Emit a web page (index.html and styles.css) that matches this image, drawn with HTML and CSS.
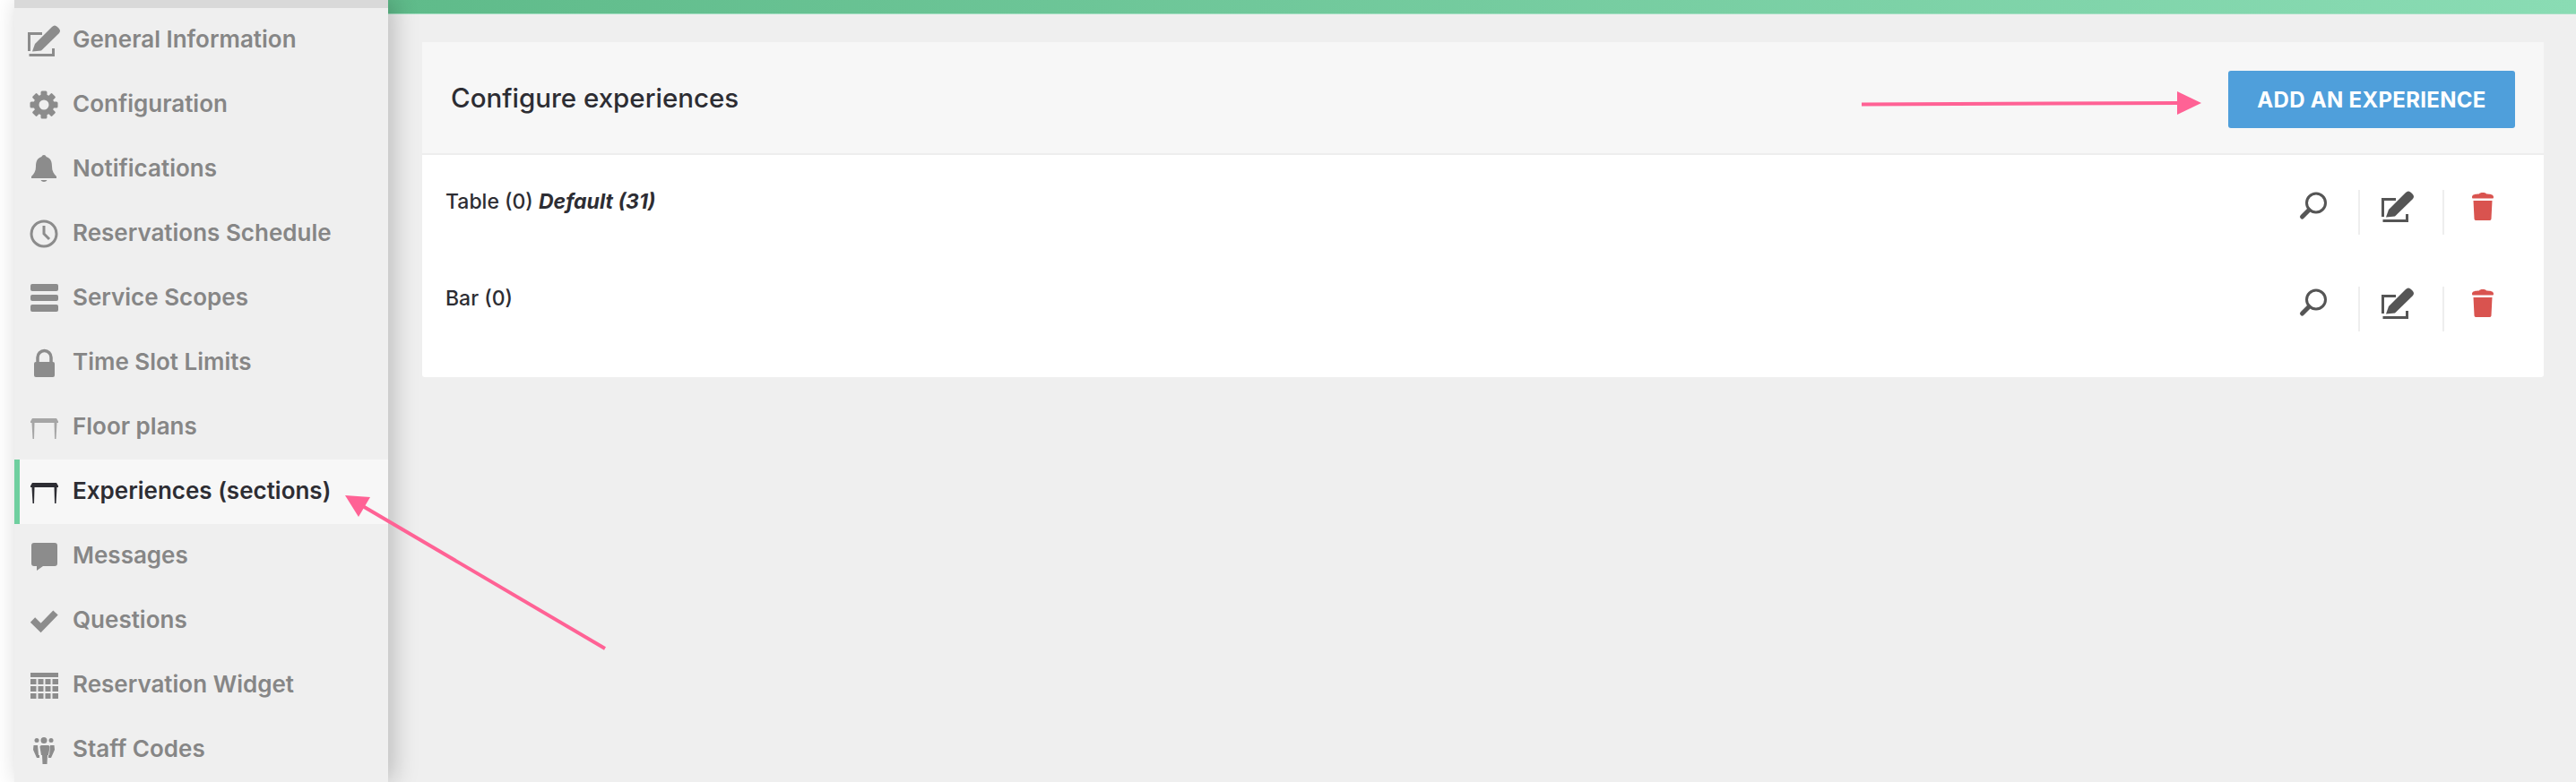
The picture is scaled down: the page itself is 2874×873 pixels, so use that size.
FILE: index.html
```html
<!DOCTYPE html>
<html>
<head>
    <title>Configure experiences</title>
    <link rel="stylesheet" href="styles.css">
</head>
<body>
    <div class="sidebar">
        <div class="sidebar-top"></div>
        <a class="nav-item">
            <svg class="nav-icon" viewBox="0 0 36 36"><path d="M1.500 30V10.500H16M1.500 34.500H28.500V27" fill="none" stroke="currentColor" stroke-width="3"/><path d="M5 30.500l3-8.500L27 3c2-2 4-2 6 0l1.500 1.500c2 2 2 4 0 6L15 29.500z" fill="currentColor"/></svg>
            <span class="nav-label">General Information</span>
        </a>
        <a class="nav-item">
            <svg class="nav-icon" viewBox="0 0 36 36"><g fill="currentColor"><rect x="14.500" y="2.500" width="7" height="31" rx="1.500"/><rect x="14.500" y="2.500" width="7" height="31" rx="1.500" transform="rotate(45 18 18)"/><rect x="14.500" y="2.500" width="7" height="31" rx="1.500" transform="rotate(90 18 18)"/><rect x="14.500" y="2.500" width="7" height="31" rx="1.500" transform="rotate(135 18 18)"/><circle cx="18" cy="18" r="11.500"/></g><circle cx="18" cy="18" r="5.500" fill="#efefef"/></svg>
            <span class="nav-label">Configuration</span>
        </a>
        <a class="nav-item">
            <svg class="nav-icon" viewBox="0 0 36 36"><path d="M18 2c1.500 0 2.500 1 2.500 2C26 5.500 27 10 27 15c0 5 2 8 5 11v2H4v-2c3-3 5-6 5-11 0-5 1-9.500 6.500-11C15.500 3 16.500 2 18 2zM14.500 30h7c-1 2.500-6 2.500-7 0z" fill="currentColor"/></svg>
            <span class="nav-label">Notifications</span>
        </a>
        <a class="nav-item">
            <svg class="nav-icon" viewBox="0 0 36 36"><circle cx="18" cy="18" r="14" fill="none" stroke="currentColor" stroke-width="3"/><path d="M18 9v9l6 6" fill="none" stroke="currentColor" stroke-width="3"/></svg>
            <span class="nav-label">Reservations Schedule</span>
        </a>
        <a class="nav-item">
            <svg class="nav-icon" viewBox="0 0 36 36"><g fill="currentColor"><rect x="3" y="2" width="31" height="8" rx="2"/><rect x="3" y="14" width="31" height="7" rx="2"/><rect x="3" y="25" width="31" height="8" rx="2"/></g></svg>
            <span class="nav-label">Service Scopes</span>
        </a>
        <a class="nav-item">
            <svg class="nav-icon" viewBox="0 0 36 36"><path d="M11 18v-6a7.500 7.500 0 0 1 15 0v6" fill="none" stroke="currentColor" stroke-width="3.500"/><rect x="7" y="17" width="23" height="17" rx="2" fill="currentColor"/></svg>
            <span class="nav-label">Time Slot Limits</span>
        </a>
        <a class="nav-item item-faded">
            <svg class="nav-icon" viewBox="0 0 36 36"><path d="M5 8h27l2 3.500v1.500h-1.500L31.500 31h-1.500l-.5-18h-22L7 31H5.500L4.500 13H3v-1.500z" fill="currentColor"/></svg>
            <span class="nav-label">Floor plans</span>
        </a>
        <a class="nav-item active">
            <svg class="nav-icon" viewBox="0 0 36 36"><path d="M5 8h27l2 3.500v1.500h-1.500L31.500 31h-1.500l-.5-18h-22L7 31H5.500L4.500 13H3v-1.500z" fill="currentColor"/></svg>
            <span class="nav-label">Experiences (sections)</span>
        </a>
        <a class="nav-item">
            <svg class="nav-icon" viewBox="0 0 36 36"><path d="M7 3h23a3 3 0 0 1 3 3v20a3 3 0 0 1-3 3H17l-7 5v-5H7a3 3 0 0 1-3-3V6a3 3 0 0 1 3-3z" fill="currentColor"/></svg>
            <span class="nav-label">Messages</span>
        </a>
        <a class="nav-item">
            <svg class="nav-icon" viewBox="0 0 36 36"><path d="M5.500 17l9 9L31 9" fill="none" stroke="currentColor" stroke-width="7.500"/></svg>
            <span class="nav-label">Questions</span>
        </a>
        <a class="nav-item">
            <svg class="nav-icon" viewBox="0 0 36 36"><path d="M3 4h31v5H3zM3 11h6.500v6H3zM11.500 11h6v6h-6zM19.500 11h6v6h-6zM27.500 11H34v6h-6.500zM3 19h6.500v6H3zM11.500 19h6v6h-6zM19.500 19h6v6h-6zM27.500 19H34v6h-6.500zM3 27h6.500v6H3zM11.500 27h6v6h-6zM19.500 27h6v6h-6zM27.500 27H34v6h-6.500z" fill="currentColor"/></svg>
            <span class="nav-label">Reservation Widget</span>
        </a>
        <a class="nav-item">
            <svg class="nav-icon" viewBox="0 0 36 36"><g fill="currentColor"><circle cx="18" cy="7.500" r="3.500"/><circle cx="10" cy="7.500" r="2.500"/><circle cx="26" cy="7.500" r="2.500"/><path d="M13.500 13h9c1.500 0 2 1 2 2l-1.500 9h-1l-.5 10h-5l-.5-10h-1l-1.500-9c0-1 .5-2 2-2z"/><path d="M6.500 13h4.500l1 11h1v3h-3L6 18z"/><path d="M29.500 13H25l-1 11h-1v3h3l4-9z"/></g></svg>
            <span class="nav-label">Staff Codes</span>
        </a>
    </div>

    <div class="main">
        <div class="top-bar"></div>
        <div class="card">
            <div class="card-header">
                <h2>Configure experiences</h2>
                <button class="btn-add">ADD AN EXPERIENCE</button>
            </div>
            <div class="row">
                <p class="row-name">Table (0) <em>Default (31)</em></p>
                <div class="row-actions">
                    <span class="action"><svg class="action-icon" viewBox="0 0 36 36"><circle cx="21" cy="14.500" r="10.500" fill="none" stroke="currentColor" stroke-width="3"/><path d="M13 22.500L5.500 30" fill="none" stroke="currentColor" stroke-width="5" stroke-linecap="round"/></svg></span>
                    <span class="action"><svg class="action-icon" viewBox="0 0 36 36"><path d="M1.500 30V10.500H16M1.500 34.500H28.500V27" fill="none" stroke="currentColor" stroke-width="3"/><path d="M5 30.500l3-8.500L27 3c2-2 4-2 6 0l1.500 1.500c2 2 2 4 0 6L15 29.500z" fill="currentColor"/></svg></span>
                    <span class="action action-delete"><svg class="action-icon" viewBox="0 0 36 36"><path d="M14 4.500c0-2 8-2 8 0 4 0 8 .5 8 3.500 0 1-.5 1.500-1 1.500H7c-.5 0-1-.5-1-1.500 0-3 4-3.500 8-3.500zM7.500 12h21l-1 20c0 1.500-1 2-2 2h-15c-1 0-2-.5-2-2z" fill="currentColor"/></svg></span>
                </div>
            </div>
            <div class="row">
                <p class="row-name">Bar (0)</p>
                <div class="row-actions">
                    <span class="action"><svg class="action-icon" viewBox="0 0 36 36"><circle cx="21" cy="14.500" r="10.500" fill="none" stroke="currentColor" stroke-width="3"/><path d="M13 22.500L5.500 30" fill="none" stroke="currentColor" stroke-width="5" stroke-linecap="round"/></svg></span>
                    <span class="action"><svg class="action-icon" viewBox="0 0 36 36"><path d="M1.500 30V10.500H16M1.500 34.500H28.500V27" fill="none" stroke="currentColor" stroke-width="3"/><path d="M5 30.500l3-8.500L27 3c2-2 4-2 6 0l1.500 1.500c2 2 2 4 0 6L15 29.500z" fill="currentColor"/></svg></span>
                    <span class="action action-delete"><svg class="action-icon" viewBox="0 0 36 36"><path d="M14 4.500c0-2 8-2 8 0 4 0 8 .5 8 3.500 0 1-.5 1.500-1 1.500H7c-.5 0-1-.5-1-1.500 0-3 4-3.500 8-3.500zM7.500 12h21l-1 20c0 1.500-1 2-2 2h-15c-1 0-2-.5-2-2z" fill="currentColor"/></svg></span>
                </div>
            </div>
        </div>
    </div>

    <!-- pink annotation arrows drawn on top of the screenshot -->
    <svg class="annotations" viewBox="0 0 2874 873">
        <path d="M2077 116.500L2432 115" stroke="#ff6295" stroke-width="4" fill="none"/>
        <path d="M2429 102L2456 115 2429 128z" fill="#ff6295"/>
        <path d="M675 724L403 564" stroke="#ff6295" stroke-width="4" fill="none"/>
        <path d="M385 553L413 555 400 577z" fill="#ff6295"/>
    </svg>
</body>
</html>
```

FILE: styles.css
```css
body {
    margin: 0;
    height: 100vh;
    overflow: hidden;
    display: flex;
    position: relative;
    background-color: #ffffff;
    padding-left: 16px;
    box-sizing: border-box;
    font-family: 'Inter', sans-serif;
}

/* Sidebar */
.sidebar {
    width: 417px;
    flex-shrink: 0;
    background-color: #efefef;
    box-shadow: 6px 0 26px rgba(0, 0, 0, 0.22);
    position: relative;
    z-index: 1;
}

.sidebar-top {
    height: 9px;
    background-color: #d9d9d9;
}

.nav-item {
    display: flex;
    align-items: center;
    gap: 14px;
    height: 72px;
    padding-left: 15px;
    font-size: 26px;
    font-weight: 600;
    color: #868686;
    box-sizing: border-box;
}

.nav-label {
    margin-top: -4px;
}

.nav-icon {
    width: 36px;
    height: 36px;
    flex-shrink: 0;
    color: #8c8c8c;
}

.item-faded .nav-icon {
    color: #a6a6a6;
}

.nav-item.active {
    background-color: #f7f7f7;
    border-left: 6px solid #6fcf9f;
    padding-left: 9px;
    color: #2d2d33;
}

.nav-item.active .nav-icon {
    color: #2d2d33;
}

/* Main area */
.main {
    flex-grow: 1;
    display: flex;
    flex-direction: column;
    background-color: #efefef;
}

.top-bar {
    height: 16px;
    flex-shrink: 0;
    background: linear-gradient(to right, #5fbb8a, #8adcb4);
    border-bottom: 1px solid #a6e0c4;
    box-sizing: border-box;
}

.card {
    margin: 31px 36px 0 38px;
    background-color: #ffffff;
    padding-bottom: 32px;
    border-radius: 3px;
}

.card-header {
    display: flex;
    align-items: center;
    justify-content: space-between;
    height: 126px;
    padding: 0 32px;
    background-color: #f7f7f7;
    border-bottom: 2px solid #eeeeee;
    box-sizing: border-box;
}

.card-header h2 {
    margin: 0;
    font-size: 29.5px;
    font-weight: 500;
    color: #2d2d33;
}

.btn-add {
    width: 320px;
    height: 64px;
    margin-top: 4px;
    background-color: #4f9fdb;
    color: #ffffff;
    font-family: inherit;
    font-size: 24px;
    font-weight: 700;
    letter-spacing: 0.3px;
    border: none;
    border-radius: 3px;
}

.row {
    display: flex;
    justify-content: space-between;
    height: 108px;
    padding: 39px 25px 0 26px;
    box-sizing: border-box;
}

.row-name {
    margin: 0;
    font-size: 23px;
    font-weight: 500;
    line-height: 26px;
    color: #2d2d33;
}

.row-name em {
    font-weight: 700;
}

.row-actions {
    display: flex;
}

.action {
    width: 94px;
    height: 50px;
    padding-right: 8px;
    display: flex;
    justify-content: center;
    color: #555555;
    border-right: 2px solid #eeeeee;
    box-sizing: border-box;
}

.action-delete {
    width: 86px;
    padding-right: 0;
    color: #d9534f;
    border-right: none;
}

.action-icon {
    width: 36px;
    height: 36px;
}

/* Annotation layer */
.annotations {
    position: absolute;
    top: 0;
    left: 0;
    width: 2874px;
    height: 873px;
    z-index: 2;
    pointer-events: none;
}
```
